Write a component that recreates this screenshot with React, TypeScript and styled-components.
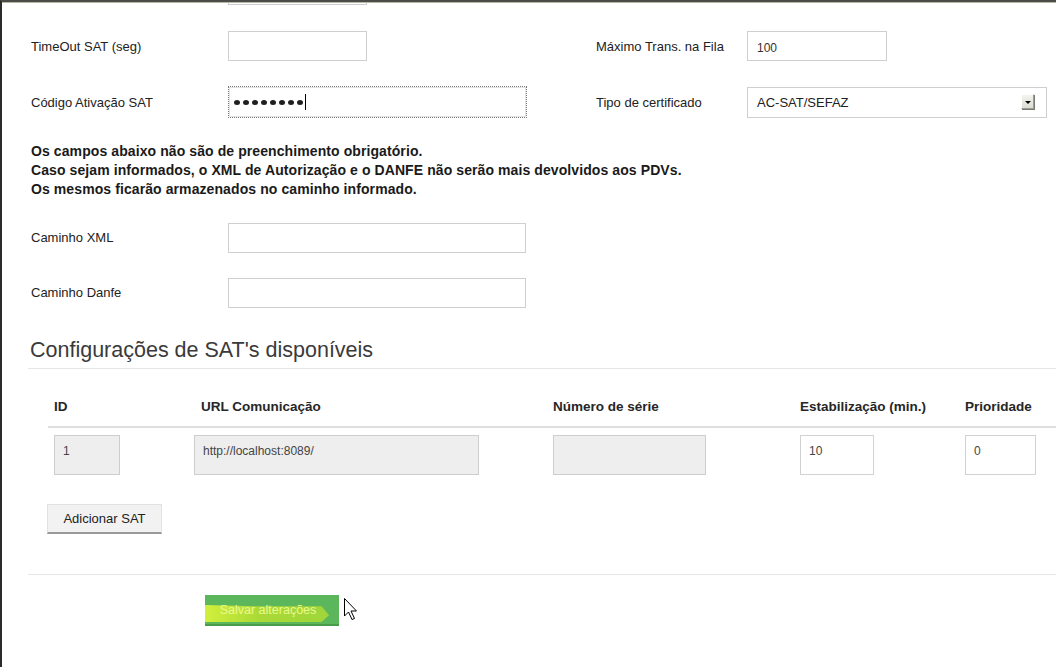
import React from 'react';
import styled, { createGlobalStyle } from 'styled-components';

const GlobalStyle = createGlobalStyle`
  html, body {
    margin: 0;
    padding: 0;
    background: #fff;
    overflow: hidden;
  }
  body {
    font-family: "Liberation Sans", Arial, sans-serif;
    color: #333;
  }
`;

const Frame = styled.div`
  height: 667px;
  box-sizing: border-box;
  border-top: 2px solid #4b4b48;
  border-left: 2px solid #2b2b2b;
  overflow: hidden;
  position: relative;

  &::before {
    content: '';
    position: absolute;
    top: 0;
    left: 0;
    right: 0;
    height: 1px;
    background: #b9b8a6;
  }
`;

const Content = styled.div`
  margin-top: -40px;
  padding-left: 26px;
`;

const FieldGrid = styled.div`
  display: grid;
  grid-template-columns: 197px 368px 151px 1fr;
  grid-auto-rows: 56px;
  align-items: center;
  padding-left: 3px;
`;

const Label = styled.label`
  font-size: 13px;
  color: #222;
`;

const TextInput = styled.input<{ $w: number }>`
  box-sizing: border-box;
  width: ${(p) => p.$w}px;
  height: 30px;
  border: 1px solid #cfcfcf;
  padding: 3px 9px 0;
  font-family: "Liberation Sans", Arial, sans-serif;
  font-size: 12px;
  color: #333;
  outline: none;
  background: #fff;
`;

const FocusBox = styled.div`
  box-sizing: border-box;
  width: 299px;
  height: 32px;
  border: 1px dotted #7a7a7a;
  box-shadow: inset 0 0 0 1px #e2e2e2;
  display: flex;
  align-items: center;
  padding-left: 5px;
`;

const Dot = styled.span`
  width: 6px;
  height: 5px;
  border-radius: 50%;
  background: #1f1f1f;
  margin-right: 3px;
`;

const Caret = styled.span`
  width: 1px;
  height: 16px;
  background: #000;
  margin-left: -1px;
`;

const SelectWrap = styled.div`
  position: relative;
  width: 300px;
`;

const Select = styled.select`
  appearance: none;
  box-sizing: border-box;
  width: 300px;
  height: 31px;
  border: 1px solid #cfcfcf;
  background: #fff;
  padding: 0 9px;
  font-family: "Liberation Sans", Arial, sans-serif;
  font-size: 13px;
  color: #222;
  outline: none;
`;

const SelectArrow = styled.span`
  position: absolute;
  right: 13px;
  top: 7px;
  width: 13px;
  height: 15px;
  box-sizing: border-box;
  background: linear-gradient(#f4f4ef, #dcdcd4);
  border: 1px solid #9d9d97;
  border-top-color: #fff;
  border-left-color: #fff;
  box-shadow: 1px 1px 0 #7a7a74;
  display: flex;
  align-items: center;
  justify-content: center;

  &::after {
    content: '';
    border-left: 3px solid transparent;
    border-right: 3px solid transparent;
    border-top: 3px solid #000;
    margin-top: 2px;
  }
`;

const Notes = styled.p`
  margin: 12px 0 0;
  padding-left: 3px;
  font-size: 14px;
  font-weight: bold;
  line-height: 19px;
  letter-spacing: 0.09px;
  color: #1a1a1a;
`;

const PathGrid = styled(FieldGrid)`
  grid-template-columns: 197px 1fr;
  grid-auto-rows: 55px;
  margin-top: 11px;
`;

const SectionTitle = styled.h3`
  margin: 18px 0 0;
  padding-left: 2px;
  font-size: 21.5px;
  font-weight: normal;
  line-height: 24px;
  color: #3a3a3a;
`;

const Divider = styled.hr`
  border: 0;
  border-top: 1px solid #e6e6e6;
  margin: 6px 0 0;
`;

const Table = styled.table`
  margin: 19px 0 0 20px;
  border-collapse: collapse;
  width: 1010px;
  table-layout: fixed;
`;

const Th = styled.th<{ $w: number; $pl?: number }>`
  box-sizing: border-box;
  width: ${(p) => p.$w}px;
  text-align: left;
  font-size: 13.5px;
  font-weight: bold;
  line-height: 18px;
  color: #262626;
  white-space: nowrap;
  padding: 10px 0 10px ${(p) => p.$pl ?? 8}px;
  border-bottom: 2px solid #dedede;
`;

const Td = styled.td<{ $pl?: number }>`
  padding: 7px 0 8px ${(p) => p.$pl ?? 8}px;
  vertical-align: top;
`;

const CellInput = styled.input<{ $w: number; $ro?: boolean }>`
  box-sizing: border-box;
  width: ${(p) => p.$w}px;
  height: 40px;
  border: 1px solid ${(p) => (p.$ro ? '#cdcdcd' : '#d2d2d2')};
  background: ${(p) => (p.$ro ? '#eeeeee' : '#fff')};
  padding: 0 8px 8px;
  font-family: "Liberation Sans", Arial, sans-serif;
  font-size: 12px;
  color: #444;
  outline: none;
`;

const AddButton = styled.button`
  margin: 21px 0 0 19px;
  width: 115px;
  height: 30px;
  padding: 0;
  background: #f2f2f2;
  border: 1px solid #e2e2e2;
  border-bottom: 2px solid #9a9a9a;
  font-family: "Liberation Sans", Arial, sans-serif;
  font-size: 13px;
  color: #222;
`;

const Footer = styled.div`
  margin-top: 40px;
  border-top: 1px solid #e6e6e6;
  padding: 20px 0 0 177px;
  display: flex;
  align-items: flex-start;
  gap: 4px;
`;

const SaveButton = styled.button`
  position: relative;
  width: 134px;
  height: 31px;
  padding: 0;
  border: 0;
  border-bottom: 2px solid #4a9c4b;
  background: #5cb75c;
  overflow: hidden;
  font-family: "Liberation Sans", Arial, sans-serif;
  font-size: 12.5px;
  color: #eaf98c;

  &::before {
    content: '';
    position: absolute;
    left: 0;
    top: 10px;
    width: 124px;
    height: 17px;
    background: linear-gradient(90deg, #d2ef3c, #a9d937 45%, #9fd63a);
    clip-path: polygon(0 0, 42% 8%, 94% 8%, 100% 60%, 94% 100%, 0 100%);
  }
`;

const SaveLabel = styled.span`
  position: relative;
  display: block;
  margin-top: 1px;
  padding-right: 8px;
`;

const Cursor = () => (
  <svg width="18" height="26" viewBox="0 0 18 26" style={{ marginTop: 2 }}>
    <path
      d="M1.5 1.5 L1.5 19 L5.5 15 L9 22.5 L11.5 21.5 L8 14 L13.5 14 Z"
      fill="#fff"
      stroke="#000"
      strokeWidth="1"
      strokeLinejoin="miter"
    />
  </svg>
);

const App: React.FC = () => {
  return (
    <Frame>
      <GlobalStyle />
      <Content>
        <FieldGrid>
          <Label />
          <TextInput $w={139} readOnly />
          <span />
          <span />

          <Label>TimeOut SAT (seg)</Label>
          <TextInput $w={139} readOnly />
          <Label>Máximo Trans. na Fila</Label>
          <TextInput $w={140} defaultValue="100" readOnly />

          <Label>Código Ativação SAT</Label>
          <FocusBox>
            {Array.from({ length: 8 }).map((_, i) => (
              <Dot key={i} />
            ))}
            <Caret />
          </FocusBox>
          <Label>Tipo de certificado</Label>
          <SelectWrap>
            <Select defaultValue="sefaz">
              <option value="sefaz">AC-SAT/SEFAZ</option>
            </Select>
            <SelectArrow />
          </SelectWrap>
        </FieldGrid>

        <Notes>
          Os campos abaixo não são de preenchimento obrigatório.
          <br />
          Caso sejam informados, o XML de Autorização e o DANFE não serão mais devolvidos aos PDVs.
          <br />
          Os mesmos ficarão armazenados no caminho informado.
        </Notes>

        <PathGrid>
          <Label>Caminho XML</Label>
          <TextInput $w={298} readOnly />
          <Label>Caminho Danfe</Label>
          <TextInput $w={298} readOnly />
        </PathGrid>

        <SectionTitle>Configurações de SAT's disponíveis</SectionTitle>
        <Divider />

        <Table>
          <thead>
            <tr>
              <Th $w={138} $pl={6}>ID</Th>
              <Th $w={359} $pl={15}>URL Comunicação</Th>
              <Th $w={247}>Número de série</Th>
              <Th $w={165}>Estabilização (min.)</Th>
              <Th $w={101}>Prioridade</Th>
            </tr>
          </thead>
          <tbody>
            <tr>
              <Td $pl={6}>
                <CellInput $w={66} $ro defaultValue="1" readOnly />
              </Td>
              <Td>
                <CellInput $w={285} $ro defaultValue="http://localhost:8089/" readOnly />
              </Td>
              <Td>
                <CellInput $w={153} $ro readOnly />
              </Td>
              <Td>
                <CellInput $w={74} defaultValue="10" readOnly />
              </Td>
              <Td>
                <CellInput $w={71} defaultValue="0" readOnly />
              </Td>
            </tr>
          </tbody>
        </Table>

        <AddButton>Adicionar SAT</AddButton>

        <Footer>
          <SaveButton>
            <SaveLabel>Salvar alterações</SaveLabel>
          </SaveButton>
          <Cursor />
        </Footer>
      </Content>
    </Frame>
  );
};

export default App;
